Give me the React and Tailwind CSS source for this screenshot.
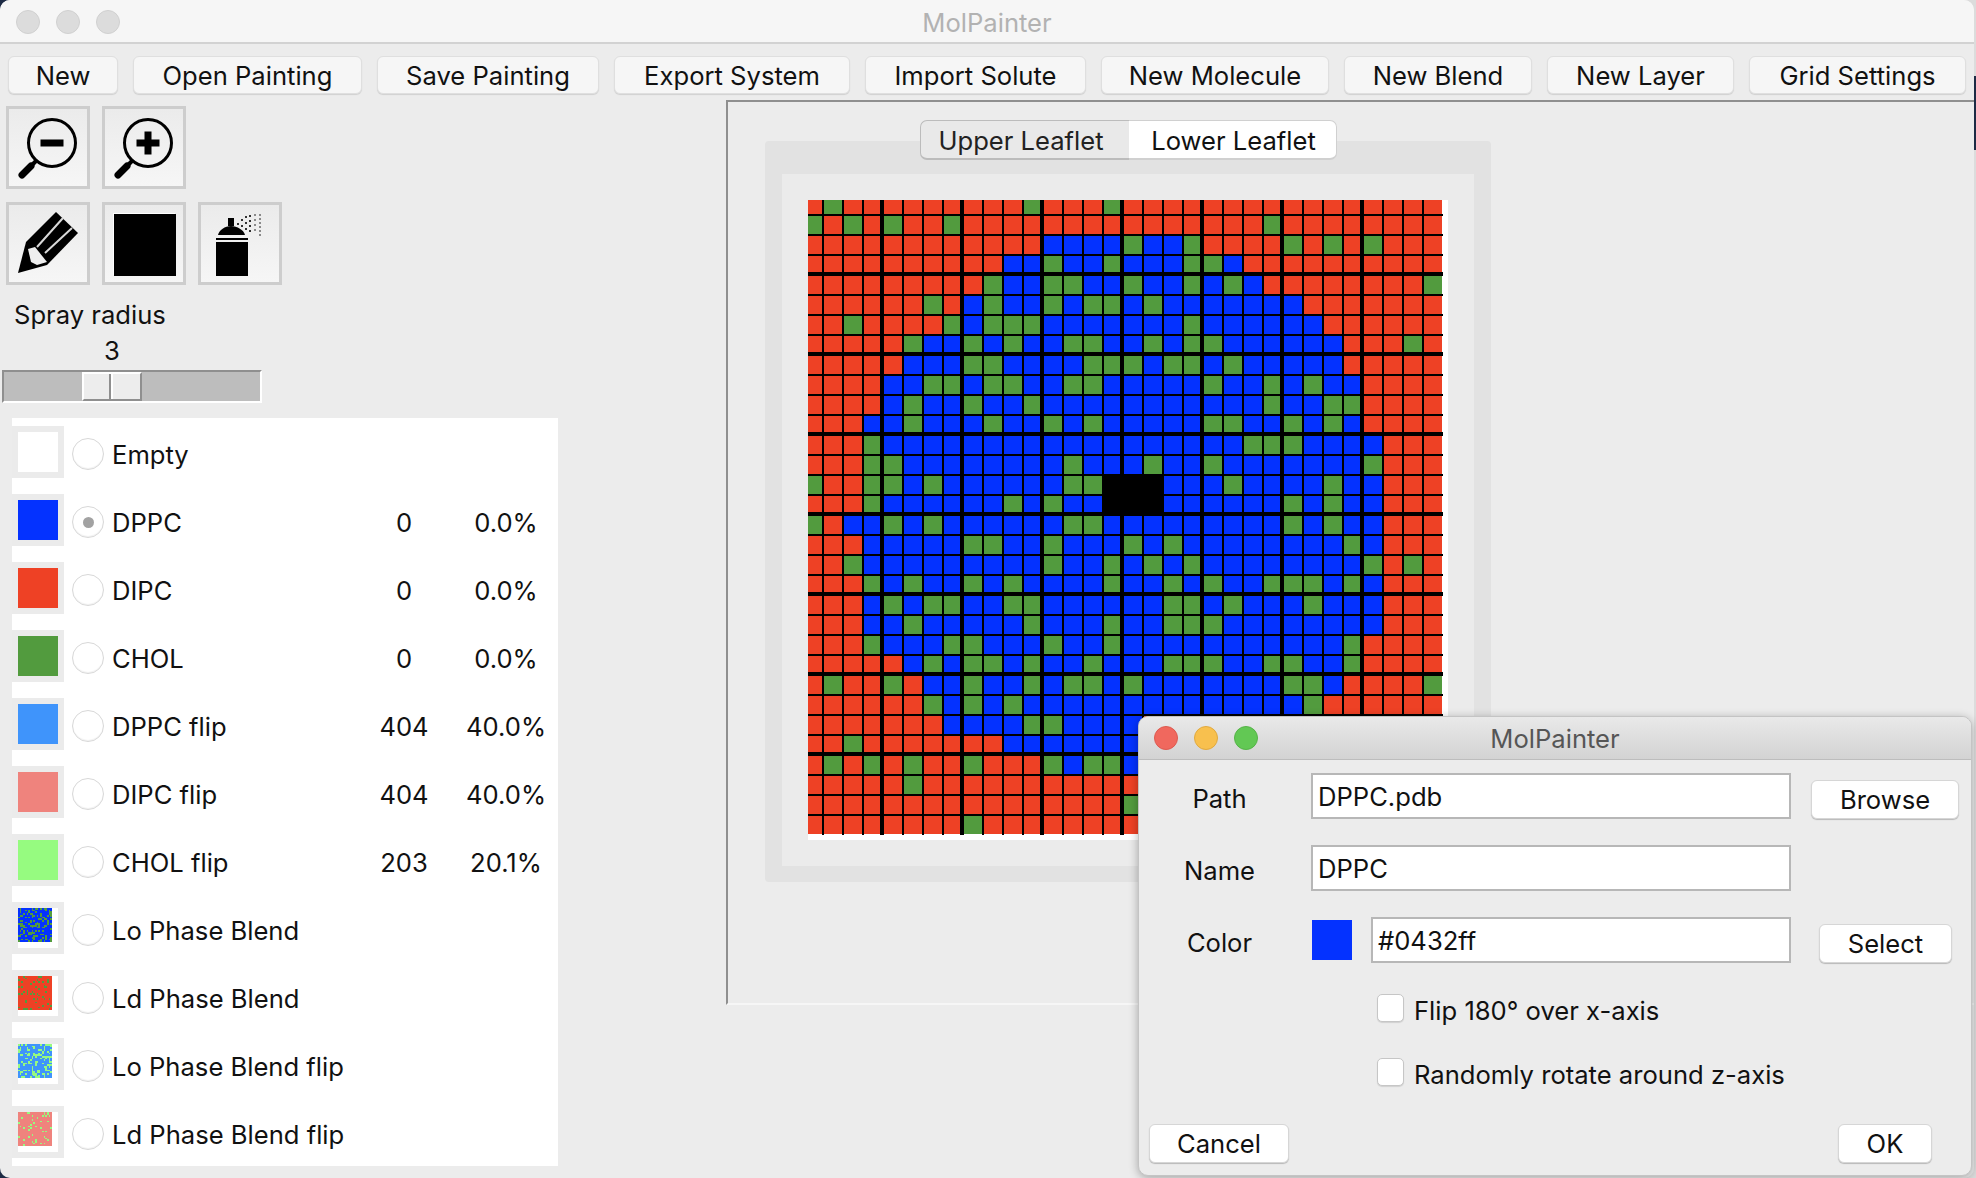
import React from 'react';

const COLORS = { R: '#ee4125', G: '#529b3e', B: '#0432ff', K: '#000000' };

// painted lipid grid, one letter per cell (area under the dialog is filled with R)
const PAINTING = [
  'RGRR RRRR RRRG RRRG RRRR RRRR RRRR RRRR',
  'GRGR GRRG RRRR RRRR RRRR RRRG RRRR RRRR',
  'RRRR RRRR RRRR BBBB GBBG RRRR GRGR GRRR',
  'RRRR RRRR RRBB GBBG BBBG GBRR RRRR RRRR',
  'RRRR RRRR RGBB GGBB GBBG BGBR RRRR RRRG',
  'RRRR RRGR BGBB GBGG BGBB BBBB BRRR RRRR',
  'RRGR RRRG BGGG BBBB BBBG BBBB BBRR RRRR',
  'RRRR RGBB GBGB BGGB BGBG GBBB BBBR RRGR',
  'RRRR RBBB GGBB BBGG GBGG BGBB BBBR RRRR',
  'RRRR BBGG BGGB BGGB BBBB GBBG BGBB RRRR',
  'RRRR BGBB GBBG BBBB BBBB BBBG BBGG RRRR',
  'RRRB BGBB BGBB GBGB BBBB GGBB GBGB RRRR',
  'RRRG BBBB BBBB BBBB BBBB BBGG GBBB BRRR',
  'RRRG GBBB BBBB BGBB BGBB GBBB BBBB GRRR',
  'GRRG GBGB BBBB BGGK KKBB BGBB BBGB BRRR',
  'RRRG BBBB BBGB GBBK KKBB BBBB GBGB BRRR',
  'GRBB GBGB BBBB BGGB BBBB BBBB GBGB BRRR',
  'RRRB BBBB GGBB GBBB GBGB BBBB BBBG BRRR',
  'RRGB BBBB BBBB GBBG BGBG BBBB BBBB GRGR',
  'RRRG BGBB GBGB BBBG BBGB GBBG GGBG BRRR',
  'RRRB GBGG BBGG BBBB BBGG BGBB BGBB BRRR',
  'RRRB BGBB BBBG BBBG BBGG GBBB BBBB BRRR',
  'RRRG BBBG GBBB GBBG BBBB BBBB BBBG RRRR',
  'RRRR RBGB GGBG BBGB BBGG GBBG GBBG RRRR',
  'RGRR GRBB GBBG BGGB GBBB BBBB GGBR RRRG',
  'RRRR RRGB GBGB BBBB BBBB BBBB BGRR RRRR',
  'RRRR RRRB BBBG GBBB BRRR RRRR RRRR RRRR',
  'RRGR RRRR RRBB BBBB BRRR RRRR RRRR RRRR',
  'RGRG RGRR GRRR GBGG BRRR RRRR RRRR RRRR',
  'RRRR RGRR RRRR RRRR RRRR RRRR RRRR RRRR',
  'RRRR RRRR RRRR RRRR GRRR RRRR RRRR RRRR',
  'RRRR RRRR GRRR RRRR RRRR RRRR RRRR RRRR',
].map((r) => r.replaceAll(' ', ''));

const TOOLBAR = [
  { label: 'New', w: 'w-[110px]' },
  { label: 'Open Painting', w: 'w-[229px]' },
  { label: 'Save Painting', w: 'w-[222px]' },
  { label: 'Export System', w: 'w-[236px]' },
  { label: 'Import Solute', w: 'w-[221px]' },
  { label: 'New Molecule', w: 'w-[228px]' },
  { label: 'New Blend', w: 'w-[188px]' },
  { label: 'New Layer', w: 'w-[187px]' },
  { label: 'Grid Settings', w: 'w-[217px]' },
];

const LIPIDS = [
  { name: 'Empty', color: '#ffffff' },
  { name: 'DPPC', color: '#0432ff', count: '0', pct: '0.0%', selected: true },
  { name: 'DIPC', color: '#ee4125', count: '0', pct: '0.0%' },
  { name: 'CHOL', color: '#529b3e', count: '0', pct: '0.0%' },
  { name: 'DPPC flip', color: '#3f94fb', count: '404', pct: '40.0%' },
  { name: 'DIPC flip', color: '#ef837d', count: '404', pct: '40.0%' },
  { name: 'CHOL flip', color: '#96fb80', count: '203', pct: '20.1%' },
  { name: 'Lo Phase Blend', blend: ['#0432ff', '#529b3e', 0.3, 7] },
  { name: 'Ld Phase Blend', blend: ['#ee4125', '#529b3e', 0.14, 23] },
  { name: 'Lo Phase Blend flip', blend: ['#3f94fb', '#96fb80', 0.3, 41] },
  { name: 'Ld Phase Blend flip', blend: ['#ef837d', '#96fb80', 0.1, 59] },
];

const BlendSwatch = ({ base, dot, amount, seed }) => {
  let s = seed;
  const dots = [];
  for (let y = 0; y < 20; y++) {
    for (let x = 0; x < 20; x++) {
      s = (s * 1103515245 + 12345) % 2147483648;
      if (s / 2147483648 < amount) dots.push([x, y]);
    }
  }
  return (
    <svg viewBox="0 0 20 20" className="w-[34px] h-[34px] block" shapeRendering="crispEdges">
      <rect width="20" height="20" fill={base} />
      {dots.map(([x, y]) => (
        <rect key={`${x}-${y}`} x={x} y={y} width="1" height="1" fill={dot} />
      ))}
    </svg>
  );
};

const Painting = () => {
  const size = (k) => (k % 4 === 3 && k < 31 ? 16 : 18);
  return (
    <svg width="640" height="640" viewBox="0 0 640 640" className="block" shapeRendering="crispEdges">
      {PAINTING.map((row, r) =>
        row.split('').map((c, k) => (
          <rect
            key={`${r}-${k}`}
            x={20 * k - 4}
            y={20 * r - 4}
            width={size(k)}
            height={size(r)}
            fill={COLORS[c]}
          />
        ))
      )}
      {Array.from({ length: 31 }, (_, k) => {
        const major = k % 4 === 3;
        const pos = 20 * k - 4 + size(k);
        const w = major ? 4 : 2;
        return (
          <g key={k}>
            <rect x={pos} y="0" width={w} height="635" fill="#000" />
            <rect x="0" y={pos} width="635" height={w} fill="#000" />
          </g>
        );
      })}
      <rect x="294" y="274" width="62" height="40" fill="#000" />
    </svg>
  );
};

const Magnifier = ({ plus }) => (
  <svg viewBox="0 0 78 77" className="w-[78px] h-[77px]">
    <circle cx="43" cy="34" r="23.5" fill="none" stroke="#000" strokeWidth="3" />
    <path d="M27 52 L22 57" stroke="#000" strokeWidth="4" />
    <path d="M22 57 L13 66" stroke="#000" strokeWidth="7" strokeLinecap="round" />
    <rect x="31.5" y="30.5" width="23" height="7" fill="#000" />
    {plus && <rect x="39.5" y="22.5" width="7" height="23" fill="#000" />}
  </svg>
);

const Pencil = () => (
  <svg viewBox="0 0 78 77" className="w-[78px] h-[77px]">
    <path d="M9 68 L17 37 L47 7 L69 28 L38 60 Z" fill="#000" />
    <path d="M19 44 L26 42 L38 57 L28 60 L22 57 Z" fill="#eeeeee" />
    <path d="M28 42 L54 13 M36 48 L63 23" stroke="#d8d8d8" strokeWidth="2" fill="none" />
  </svg>
);

const Spray = () => {
  const dots = [
    [36, 18], [40, 14], [40, 20], [44, 11], [44, 17], [44, 23], [48, 10], [48, 15], [48, 20], [48, 25],
    [53, 9], [53, 14], [53, 19], [53, 24], [58, 9], [58, 13], [58, 17], [58, 21], [58, 25], [58, 29],
  ];
  return (
    <svg viewBox="0 0 78 77" className="w-[78px] h-[77px]" shapeRendering="crispEdges">
      <rect x="27" y="13" width="6" height="8" fill="#000" />
      <path d="M17 30 C18 25 24 21 30 21 C36 21 43 25 44 30 Z" fill="#000" shapeRendering="auto" />
      <rect x="15" y="33" width="32" height="2" fill="#000" />
      <rect x="15" y="37" width="32" height="34" fill="#000" />
      <rect x="44" y="37" width="3" height="31" fill="#000" />
      {dots.map(([x, y]) => (
        <rect key={`${x}-${y}`} x={x} y={y} width="2" height="2" fill={x > 50 ? '#8a8a8a' : '#333'} />
      ))}
    </svg>
  );
};

const ToolButton = ({ children }) => (
  <div className="w-[84px] h-[83px] border-[3px] border-[#cdcdcd] bg-gradient-to-b from-[#ebebeb] to-[#f6f6f6] flex items-center justify-center">
    {children}
  </div>
);

const Radio = ({ selected }) => (
  <div className="w-[32px] h-[32px] mt-[4px] ml-[8px] rounded-full bg-white border border-[#d8d8d8] shadow-[inset_0_-1px_1px_rgba(0,0,0,0.06)] flex items-center justify-center">
    {selected && <div className="w-[11px] h-[11px] rounded-full bg-[#a2a2a2]" />}
  </div>
);

const LipidRow = ({ lipid }) => (
  <div className="flex items-center h-[52px]">
    <div className="w-[52px] h-[52px] p-[6px] bg-[#ebebeb]">
      {lipid.blend ? (
        <div className="w-[40px] h-[40px] bg-white">
          <BlendSwatch base={lipid.blend[0]} dot={lipid.blend[1]} amount={lipid.blend[2]} seed={lipid.blend[3]} />
        </div>
      ) : (
        <div className="w-[40px] h-[40px]" style={{ backgroundColor: lipid.color }} />
      )}
    </div>
    <Radio selected={lipid.selected} />
    <div className="w-[262px] ml-[8px] mt-[6px]">{lipid.name}</div>
    <div className="w-[60px] text-center mt-[6px]">{lipid.count}</div>
    <div className="w-[100px] ml-[22px] text-center mt-[6px]">{lipid.pct}</div>
  </div>
);

const DialogButton = ({ children, className }) => (
  <button className={`h-[39px] pb-[2px] bg-white rounded-[6px] border border-[#d6d6d6] shadow-[0_1px_1px_rgba(0,0,0,0.22)] ${className}`}>
    {children}
  </button>
);

const TextField = ({ value, className }) => (
  <div className={`h-[46px] bg-white border-2 border-[#b7b7b7] pl-[5px] pt-[2px] flex items-center ${className}`}>{value}</div>
);

const Dialog = () => (
  <div className="absolute left-[1138px] top-[716px] w-[834px] h-[460px] rounded-[10px] overflow-hidden bg-[#ececec] border border-[#c4c4c4] shadow-[0_2px_10px_rgba(0,0,0,0.3)] text-[25.6px] text-[#111]">
    <div className="relative h-[43px] pt-[3px] bg-gradient-to-b from-[#e9e9e9] to-[#d3d3d3] border-b border-[#bdbdbd] flex items-center justify-center text-[#565656]">
      <div className="absolute left-[15px] top-[9px] flex gap-[16px]">
        <div className="w-[24px] h-[24px] rounded-full bg-[#f0685e] border border-[#dd5a50]" />
        <div className="w-[24px] h-[24px] rounded-full bg-[#f8c04e] border border-[#e0a93f]" />
        <div className="w-[24px] h-[24px] rounded-full bg-[#62c854] border border-[#55b348]" />
      </div>
      MolPainter
    </div>
    <div className="pt-[13px]">
      <div className="flex items-center h-[46px]">
        <div className="w-[161px] text-center mt-[6px]">Path</div>
        <TextField value="DPPC.pdb" className="ml-[11px] w-[480px]" />
        <DialogButton className="ml-[20px] w-[148px] mt-[6px]">Browse</DialogButton>
      </div>
      <div className="flex items-center h-[46px] mt-[26px]">
        <div className="w-[161px] text-center mt-[6px]">Name</div>
        <TextField value="DPPC" className="ml-[11px] w-[480px]" />
      </div>
      <div className="flex items-center h-[46px] mt-[26px]">
        <div className="w-[161px] text-center mt-[6px]">Color</div>
        <div className="ml-[12px] w-[40px] h-[40px] bg-[#0432ff]" />
        <TextField value="#0432ff" className="ml-[19px] w-[420px]" />
        <DialogButton className="ml-[28px] w-[133px] mt-[6px]">Select</DialogButton>
      </div>
      <div className="flex items-center h-[28px] mt-[31px] ml-[238px]">
        <div className="w-[27px] h-[28px] bg-white rounded-[5px] border border-[#c6c6c6] shadow-[0_1px_1px_rgba(0,0,0,0.12)]" />
        <div className="ml-[10px] mt-[6px]">Flip 180° over x-axis</div>
      </div>
      <div className="flex items-center h-[28px] mt-[36px] ml-[238px]">
        <div className="w-[27px] h-[28px] bg-white rounded-[5px] border border-[#c6c6c6] shadow-[0_1px_1px_rgba(0,0,0,0.12)]" />
        <div className="ml-[10px] mt-[6px]">Randomly rotate around z-axis</div>
      </div>
      <div className="flex justify-between mt-[38px] pl-[10px] pr-[39px]">
        <DialogButton className="w-[140px]">Cancel</DialogButton>
        <DialogButton className="w-[94px]">OK</DialogButton>
      </div>
    </div>
  </div>
);

export default function App() {
  return (
    <div className="relative w-[1976px] h-[1178px] overflow-hidden bg-[linear-gradient(90deg,#1d2b45_50%,#dcdcdc_50%)] font-['Inter','Liberation_Sans',sans-serif] text-[25.6px] text-[#111]">
      <div className="absolute right-0 top-[76px] w-[2px] h-[74px] bg-[#1d2b45]" />
      <div className="w-[1974px] h-[1178px] rounded-[10px] overflow-hidden bg-[#ececec]">
        <div className="relative h-[44px] pt-[5px] bg-[#f6f6f6] border-b-2 border-[#d2d2d2] flex items-center justify-center text-[#b2b2b2]">
          <div className="absolute left-[16px] top-[10px] flex gap-[16px]">
            <div className="w-[24px] h-[24px] rounded-full bg-[#dcdcdc] border border-[#d0d0d0]" />
            <div className="w-[24px] h-[24px] rounded-full bg-[#dcdcdc] border border-[#d0d0d0]" />
            <div className="w-[24px] h-[24px] rounded-full bg-[#dcdcdc] border border-[#d0d0d0]" />
          </div>
          MolPainter
        </div>

        <div className="flex gap-[15px] pl-[8px] pt-[12px] pb-[6px]">
          {TOOLBAR.map((b) => (
            <button key={b.label} className={`h-[38px] pb-[2px] ${b.w} shrink-0 bg-[#f6f6f6] rounded-[6px] border border-[#dfdfdf] shadow-[0_1px_1px_rgba(0,0,0,0.12)]`}>
              {b.label}
            </button>
          ))}
        </div>

        <div className="flex">
          <div className="w-[726px] shrink-0 pt-[6px]">
            <div className="flex gap-[12px] ml-[6px]">
              <ToolButton><Magnifier /></ToolButton>
              <ToolButton><Magnifier plus /></ToolButton>
            </div>
            <div className="flex gap-[12px] ml-[6px] mt-[13px]">
              <ToolButton><Pencil /></ToolButton>
              <ToolButton>
                <div className="w-[62px] h-[62px] mt-[3px] ml-[2px] bg-black shadow-[-1px_-1px_0_#fff]" />
              </ToolButton>
              <ToolButton><Spray /></ToolButton>
            </div>
            <div className="ml-[14px] mt-[14px] h-[32px] leading-[32px]">Spray radius</div>
            <div className="w-[224px] text-center mt-[4px] h-[32px] leading-[32px]">3</div>
            <div className="ml-[2px] mt-[3px] w-[260px] h-[33px] bg-[#bdbdbd] border-t-2 border-l-2 border-[#8f8f8f] border-b-2 border-b-white border-r-2 border-r-white">
              <div className="ml-[78px] w-[60px] h-full flex border-t-2 border-l-2 border-white border-b-2 border-b-[#8f8f8f] border-r-2 border-r-[#8f8f8f] bg-[#ededed]">
                <div className="w-[27px] border-r-2 border-[#8f8f8f]" />
                <div className="flex-1 border-l-2 border-white" />
              </div>
            </div>
            <div className="ml-[12px] mt-[15px] w-[546px] bg-white py-[8px] flex flex-col gap-[16px]">
              {LIPIDS.map((l) => (
                <LipidRow key={l.name} lipid={l} />
              ))}
            </div>
          </div>

          <div className="flex-1 h-[905px] border-t-2 border-l-2 border-[#8f8f8f] border-b-2 border-b-[#f6f6f6] pt-[18px] pl-[37px]">
            <div className="w-[726px] relative z-10 flex justify-center text-[#222]">
              <div className="w-[209px] h-[40px] pt-[3px] pr-[7px] flex items-center justify-center bg-[#e9e9e9] rounded-l-[7px] border border-[#bcbcbc] border-b-2 border-r-0">
                Upper Leaflet
              </div>
              <div className="w-[208px] h-[40px] pt-[3px] pl-[3px] flex items-center justify-center bg-white rounded-r-[7px] border border-[#d0d0d0] border-b-2 border-l-0 text-[#111]">
                Lower Leaflet
              </div>
            </div>
            <div className="w-[726px] h-[741px] -mt-[19px] bg-[#e2e2e2] rounded-[4px] px-[17px] pt-[33px]">
              <div className="w-[692px] h-[692px] bg-[#ebebeb] p-[26px]">
                <div className="w-[640px] h-[640px] bg-white">
                  <Painting />
                </div>
              </div>
            </div>
          </div>
        </div>
      </div>
      <Dialog />
    </div>
  );
}
